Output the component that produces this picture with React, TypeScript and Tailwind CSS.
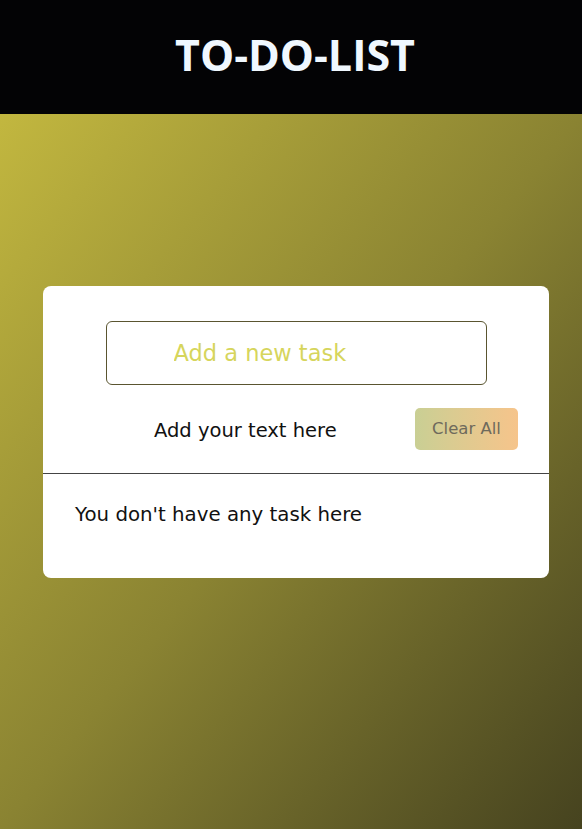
import React from 'react';

export default function App() {
  return (
    <div className="min-h-[829px] flex flex-col font-['DejaVu_Sans',sans-serif]">
      <header className="h-[114px] bg-[#030305] flex items-center justify-center">
        <h1 className="font-['Open_Sans',sans-serif] text-[43px] font-bold text-[#f0f8ff] pl-2 pb-1">TO-DO-LIST</h1>
      </header>

      <main className="flex-1 bg-gradient-to-br from-[#c2b73f] via-[#8a8332] to-[#46431f] pt-[172px] pl-[43px]">
        <div className="w-[506px] h-[292px] bg-white rounded-lg pt-[35px]">
          <div className="flex justify-center">
            <div className="w-[381px] h-[64px] border border-[#5a5530] rounded-[6px] flex items-center pl-[67px] pt-[2px]">
              <input
                type="text"
                placeholder="Add a new task"
                className="w-full outline-none text-[22.5px] placeholder:text-[#d6d55c] bg-transparent"
              />
            </div>
          </div>

          <div className="flex items-center justify-between pl-[111px] pr-[31px] mt-[23px]">
            <span className="text-[19.5px] text-[#111] pt-[3px]">Add your text here</span>
            <button className="w-[103px] h-[42px] rounded-[5px] bg-gradient-to-r from-[#c9cf94] to-[#f6c48b] text-[16.5px] text-[#6e6a5c] pt-[1px]">
              Clear All
            </button>
          </div>

          <div className="border-t border-[#444] mt-[23px]" />

          <p className="text-[19.8px] text-[#111] pl-[32px] mt-[28px] leading-[26px]">You don't have any task here</p>
        </div>
      </main>
    </div>
  );
}
